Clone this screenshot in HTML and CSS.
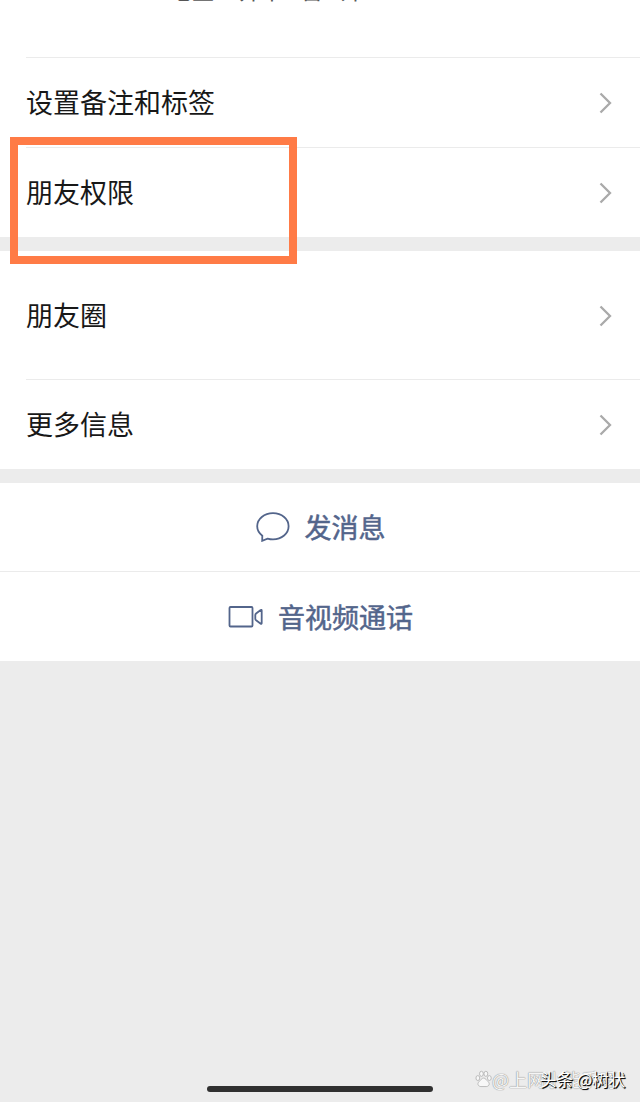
FILE: index.html
```html
<!DOCTYPE html>
<html lang="zh-CN">
<head>
  <meta charset="UTF-8">
  <meta name="viewport" content="width=device-width, initial-scale=1.0">
  <title>详细资料</title>
  <link rel="stylesheet" href="styles.css">
</head>
<body>
  <section class="profile">
    <p class="region"><span>地区:</span><span>齐中</span><span>普</span><span>外</span></p>
  </section>

  <section class="group">
    <a class="row"><span>设置备注和标签</span>
      <svg class="arrow" viewBox="0 0 14 22"><path d="M1.5 1.500 11 11 1.500 20.500"/></svg>
    </a>
    <a class="row"><span>朋友权限</span>
      <svg class="arrow" viewBox="0 0 14 22"><path d="M1.5 1.500 11 11 1.500 20.500"/></svg>
    </a>
    <div class="highlight"></div>
  </section>

  <section class="group second">
    <a class="row tall"><span>朋友圈</span>
      <svg class="arrow" viewBox="0 0 14 22"><path d="M1.5 1.500 11 11 1.500 20.500"/></svg>
    </a>
    <a class="row"><span>更多信息</span>
      <svg class="arrow" viewBox="0 0 14 22"><path d="M1.5 1.500 11 11 1.500 20.500"/></svg>
    </a>
  </section>

  <section class="actions">
    <button class="action">
      <svg class="icon chat" viewBox="0 0 34 30"><path d="M6.300 23.700C3.200 21.300 1.200 18 1.200 14.300 1.200 7.100 8.200 1.200 17 1.200s15.600 5.900 15.600 13.100S25.800 27.400 17 27.400c-1.900 0-3.800-.3-5.500-.8L6.200 28.800z"/></svg>
      <span>发消息</span>
    </button>
    <button class="action">
      <svg class="icon video" viewBox="0 0 36 22"><rect x="1.500" y="1" width="23" height="19.500" rx="1"/><path d="M33.700 4.500v12.800c0 .6-.5.8-1 .5l-4.600-3.500c-.6-.5-.8-.9-.8-1.600V9.100c0-.7.2-1.100.8-1.600L32.700 4c.5-.4 1-.1 1 .5z"/></svg>
      <span>音视频通话</span>
    </button>
  </section>

  <footer>
    <div class="home-bar"></div>
    <div class="mark mark-back">
      <svg class="paw" viewBox="0 0 18 18"><ellipse cx="3" cy="8" rx="2" ry="2.600"/><ellipse cx="6.800" cy="3.500" rx="2" ry="2.700"/><ellipse cx="11.500" cy="3.500" rx="2" ry="2.700"/><ellipse cx="15.200" cy="8" rx="2" ry="2.600"/><path d="M9 8c-2 0-3 2.300-4.700 3.800-2.600 2.600-.5 5.200 2 5.200h5.600c2.500 0 4.500-2.600 2-5.200C12.200 10.300 11.200 8 9 8z"/></svg>
      <span>@上网小能手呀</span>
    </div>
    <div class="mark mark-front">头条 @树状</div>
  </footer>
</body>
</html>
```
FILE: styles.css
```css
* { margin: 0; padding: 0; box-sizing: border-box; }
body {
  font-family: 'Noto Sans CJK SC', sans-serif;
  font-size: 27px;
  background-color: #ececec;
  color: #181818;
  min-height: 1102px;
  display: flex;
  flex-direction: column;
}
.profile {
  height: 57px;
  background: #fff;
  overflow: hidden;
}
.region {
  display: flex;
  gap: 17px;
  margin: -27px 0 0 168px;
  font-size: 23px;
  line-height: 32px;
  color: #555;
}
.group {
  position: relative;
  background: #fff;
  padding-left: 26px;
}
.row {
  display: flex;
  justify-content: space-between;
  align-items: center;
  height: 90px;
  padding-right: 27px;
  border-top: 1px solid #ebebeb;
}
.row span {
  margin-bottom: 2px;
}
.arrow {
  width: 14px;
  height: 22px;
  fill: none;
  stroke: #aaa;
  stroke-width: 2.3;
}
.second {
  margin-top: 14px;
}
.tall {
  height: 128px;
  border-top: none;
  padding-top: 1px;
}
.highlight {
  position: absolute;
  left: 10px;
  top: 80px;
  width: 287px;
  height: 127px;
  border: 8px solid #ff7b46;
  z-index: 2;
}
.actions {
  margin-top: 14px;
  background: #fff;
}
.action {
  display: flex;
  justify-content: center;
  align-items: center;
  width: 100%;
  height: 88px;
  padding-left: 1px;
  background: none;
  border: none;
  font: inherit;
  color: #53658b;
  -webkit-text-stroke: 0.5px #53658b;
}
.action span {
  margin-bottom: 1px;
}
.action + .action {
  border-top: 1px solid #ebebeb;
  height: 90px;
}
.icon {
  fill: none;
  stroke: #53658b;
  stroke-width: 1.8;
}
.chat {
  width: 34px;
  height: 30px;
  margin-right: 15px;
}
.video {
  width: 36px;
  height: 22px;
  margin-right: 14px;
}
footer {
  position: relative;
  margin-top: auto;
  height: 42px;
}
.home-bar {
  width: 226px;
  height: 6px;
  margin: 26px auto 0;
  border-radius: 3px;
  background: #303030;
}
.mark {
  position: absolute;
  top: 8px;
  line-height: 22px;
  white-space: nowrap;
  color: #f5f5f5;
}
.mark-back {
  left: 475px;
  display: flex;
  align-items: center;
  font-size: 18px;
  text-shadow: 0 0 1px #888, 0 0 1px #999;
}
.paw {
  width: 17px;
  height: 18px;
  fill: #f8f8f8;
  stroke: #aaa;
  stroke-width: 0.8;
}
.mark-front {
  left: 540px;
  font-size: 16.5px;
  color: #fff;
  text-shadow: 1px 1px 0 #111, 1px 1px 1px #111;
}
```
